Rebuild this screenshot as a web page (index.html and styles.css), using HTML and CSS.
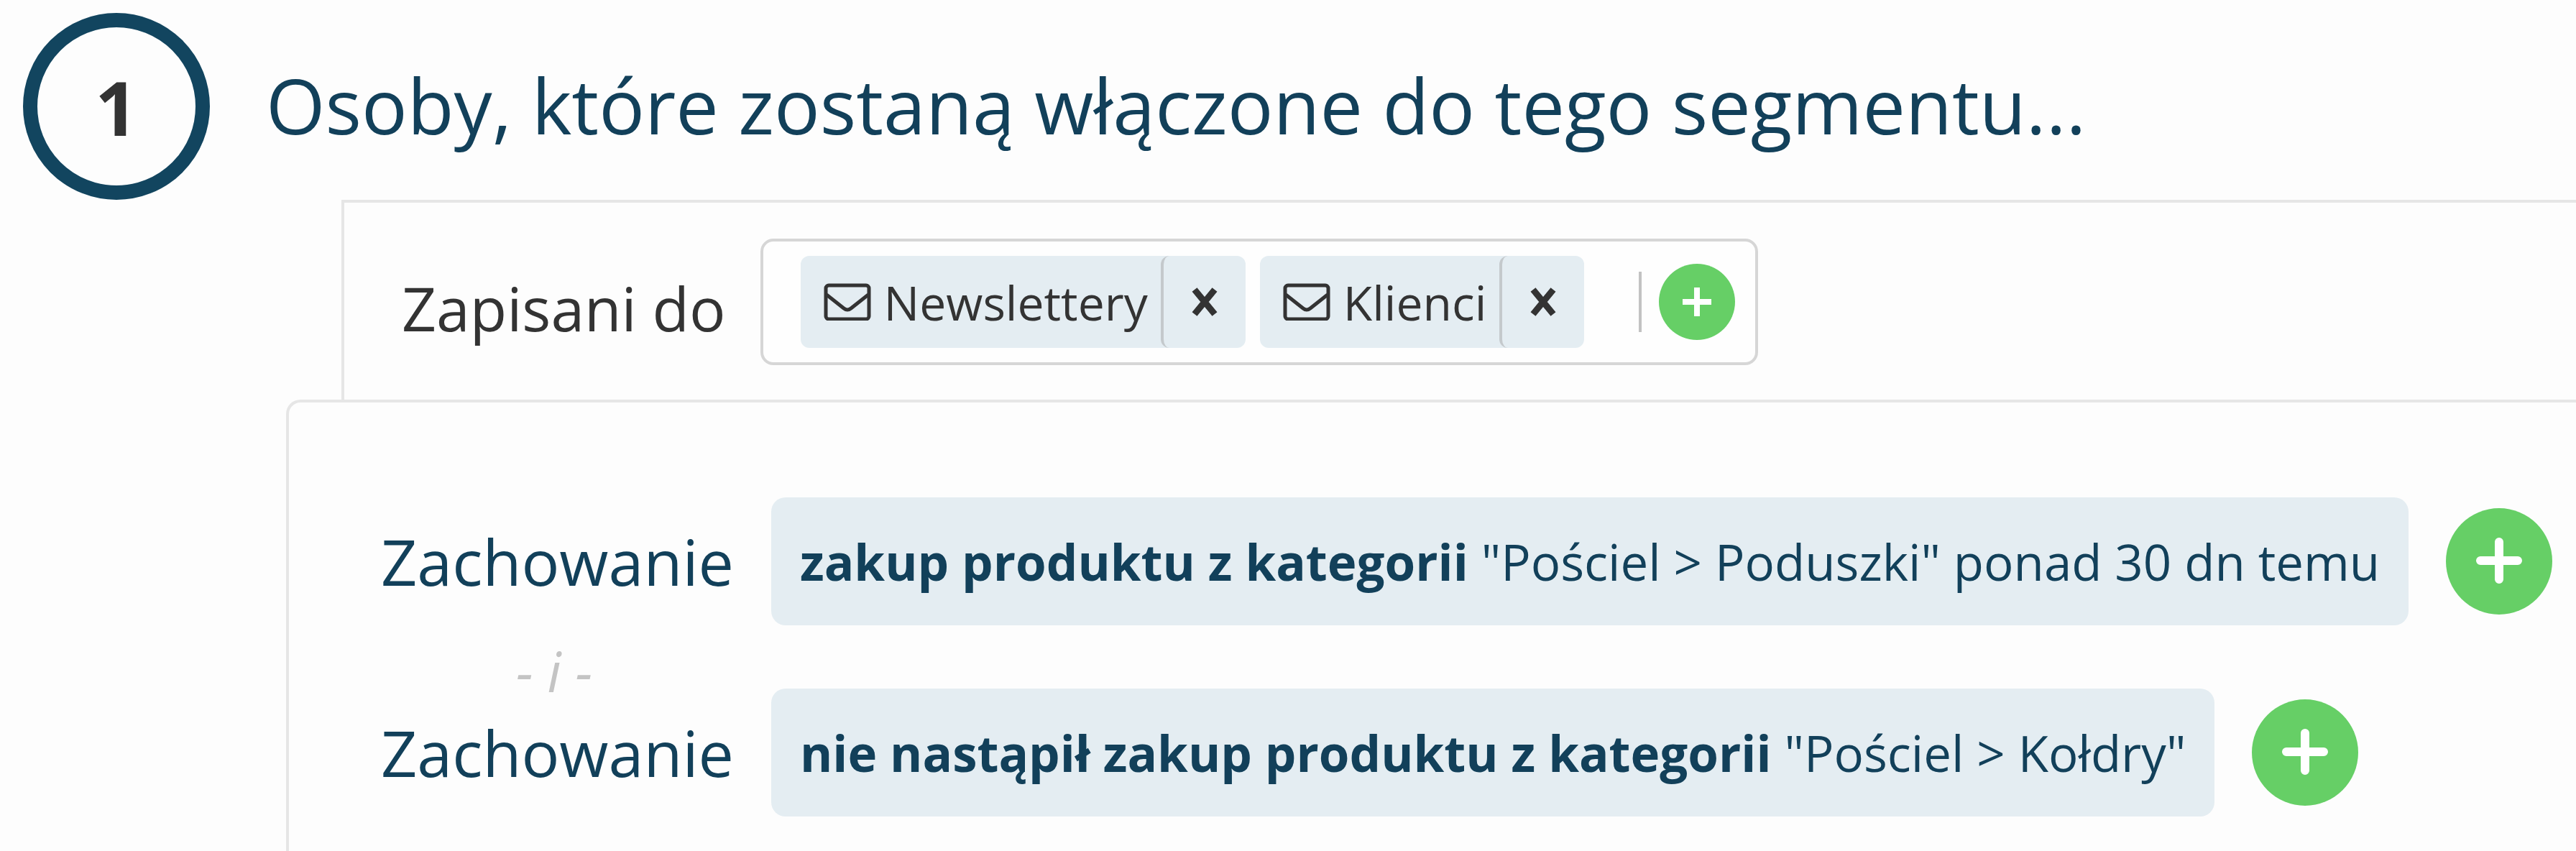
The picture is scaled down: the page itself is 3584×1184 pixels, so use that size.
FILE: index.html
```html
<!DOCTYPE html>
<html lang="pl">
<head>
    <meta charset="UTF-8">
    <meta name="viewport" content="width=device-width, initial-scale=1.0">
    <title>Segment</title>
    <link rel="stylesheet" href="styles.css">
</head>
<body>
    <header class="step-header">
        <div class="step-number">1</div>
        <h1 class="step-title">Osoby, które zostaną włączone do tego segmentu...</h1>
    </header>

    <!-- Listy, do których zapisane są osoby -->
    <section class="lists-panel">
        <label class="lists-label" for="lists-input">Zapisani do</label>
        <div class="tag-box">
            <div class="tag">
                <span class="tag-name">
                    <svg class="mail-icon" viewBox="0 0 66 52" aria-hidden="true"><rect x="3" y="3" width="60" height="47" rx="4"/><path d="M4 16 L28 35 Q33 39 38 35 L62 16"/></svg>
                    Newslettery
                </span>
                <button class="tag-remove" type="button" aria-label="Usuń Newslettery">
                    <svg class="remove-icon" viewBox="0 0 36 40" aria-hidden="true"><path d="M4 3 L32 37 M32 3 L4 37"/></svg>
                </button>
            </div>
            <div class="tag">
                <span class="tag-name">
                    <svg class="mail-icon" viewBox="0 0 66 52" aria-hidden="true"><rect x="3" y="3" width="60" height="47" rx="4"/><path d="M4 16 L28 35 Q33 39 38 35 L62 16"/></svg>
                    Klienci
                </span>
                <button class="tag-remove" type="button" aria-label="Usuń Klienci">
                    <svg class="remove-icon" viewBox="0 0 36 40" aria-hidden="true"><path d="M4 3 L32 37 M32 3 L4 37"/></svg>
                </button>
            </div>
            <input class="tag-input" id="lists-input" type="text">
            <button class="add-button add-small" type="button" aria-label="Dodaj listę">
                <svg viewBox="0 0 106 106" aria-hidden="true"><path class="plus-thin" d="M53 33 V73 M33 53 H73"/></svg>
            </button>
        </div>
    </section>

    <!-- Warunki zachowania -->
    <section class="rules-panel">
        <div class="rule">
            <span class="rule-label">Zachowanie</span>
            <div class="rule-text"><strong>zakup produktu z kategorii</strong> "Pościel &gt; Poduszki" ponad 30 dn temu</div>
            <button class="add-button" type="button" aria-label="Dodaj warunek">
                <svg viewBox="0 0 148 148" aria-hidden="true"><path class="plus" d="M74 47 V99 M48 73 H100"/></svg>
            </button>
        </div>
        <div class="rule-joiner">- i -</div>
        <div class="rule">
            <span class="rule-label">Zachowanie</span>
            <div class="rule-text"><strong>nie nastąpił zakup produktu z kategorii</strong> "Pościel &gt; Kołdry"</div>
            <button class="add-button" type="button" aria-label="Dodaj warunek">
                <svg viewBox="0 0 148 148" aria-hidden="true"><path class="plus" d="M74 47 V99 M48 73 H100"/></svg>
            </button>
        </div>
    </section>
</body>
</html>
```
FILE: styles.css
```css
* {
    box-sizing: border-box;
}
body {
    margin: 0;
    min-height: 100vh;
    display: flex;
    flex-direction: column;
    background-color: #fdfdfd;
    color: #333;
    font-family: 'Open Sans', 'Noto Sans', sans-serif;
    white-space: nowrap;
}
button {
    border: 0;
    padding: 0;
    cursor: pointer;
}
.step-header {
    display: flex;
    align-items: center;
    gap: 78px;
    padding: 18px 32px 0;
}
.step-number {
    flex: none;
    display: flex;
    align-items: center;
    justify-content: center;
    width: 260px;
    height: 260px;
    border: 20px solid #12455f;
    border-radius: 50%;
    font-size: 104px;
    font-weight: bold;
}
.step-title {
    margin: 0;
    padding-bottom: 4px;
    font-size: 106px;
    font-weight: normal;
    color: #12405a;
}
.lists-panel {
    display: flex;
    align-items: center;
    gap: 48px;
    margin-left: 475px;
    padding: 50px 80px 48px;
    border-top: 4px solid #e6e6e6;
    border-left: 4px solid #e6e6e6;
}
.lists-label {
    padding-top: 18px;
    font-size: 84px;
    line-height: 112px;
}
.tag-box {
    display: flex;
    align-items: center;
    gap: 20px;
    padding: 20px 28px 20px 52px;
    border: 4px solid #d6d6d6;
    border-radius: 18px;
    background-color: #fefefe;
}
.tag {
    display: flex;
    height: 128px;
    border-radius: 12px;
    background-color: #e4edf2;
    font-size: 66px;
}
.tag-name {
    display: flex;
    align-items: center;
    gap: 18px;
    padding: 0 18px 0 32px;
}
.mail-icon {
    width: 66px;
    height: 52px;
    fill: none;
    stroke: #333;
    stroke-width: 5;
}
.tag-remove {
    display: flex;
    align-items: center;
    justify-content: center;
    width: 118px;
    border-left: 4px solid #c4c9cc;
    border-radius: 12px;
    background-color: transparent;
}
.remove-icon {
    width: 36px;
    height: 40px;
    fill: none;
    stroke: #333;
    stroke-width: 9;
}
.tag-input {
    width: 8px;
    height: 84px;
    margin-left: 52px;
    margin-right: 4px;
    padding: 0;
    border: 0;
    border-right: 4px solid #c2c2c2;
    background-color: transparent;
    font: inherit;
    outline: none;
}
.add-button {
    flex: none;
    width: 148px;
    height: 148px;
    border-radius: 50%;
    background-color: #66cf66;
}
.add-button svg {
    display: block;
    fill: none;
    stroke: #fff;
    stroke-linecap: round;
}
.add-small {
    width: 106px;
    height: 106px;
}
.plus {
    stroke-width: 12;
}
.plus-thin {
    stroke-width: 8;
    stroke-linecap: butt;
}
.rules-panel {
    flex: 1;
    margin-left: 398px;
    padding: 132px 0 48px 128px;
    border-top: 4px solid #e6e6e6;
    border-left: 4px solid #e6e6e6;
    border-top-left-radius: 20px;
}
.rule {
    display: flex;
    align-items: center;
    gap: 52px;
}
.rule-label {
    font-size: 88px;
    color: #12405a;
}
.rule-text {
    padding: 0 40px;
    border-radius: 20px;
    background-color: #e4edf2;
    color: #12405a;
    font-size: 69px;
    line-height: 178px;
}
.rule-joiner {
    margin-bottom: -40px;
    padding-left: 188px;
    color: #c4c4c4;
    font-size: 76px;
    font-style: italic;
    line-height: 128px;
}
```
